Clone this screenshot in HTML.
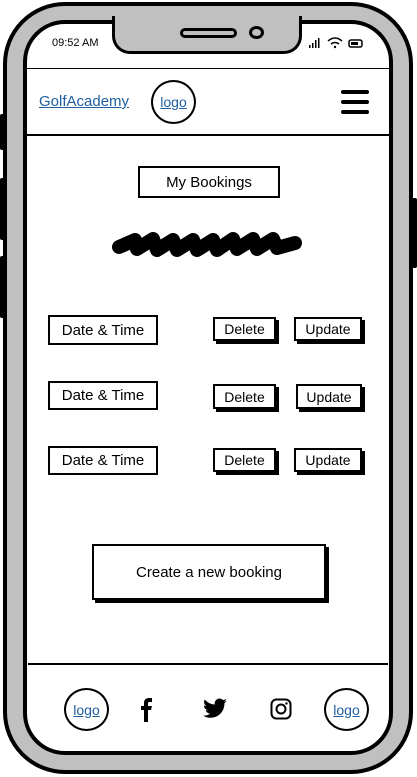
<!DOCTYPE html>
<html><head><meta charset="utf-8"><style>
*{margin:0;padding:0;box-sizing:border-box}
body{width:417px;height:777px;overflow:hidden;background:#fff;position:relative;font-family:"Liberation Sans",sans-serif}
.a{position:absolute}
.box{position:absolute;border:2px solid #000;background:#fff;display:flex;align-items:center;justify-content:center;font-size:15px;color:#000}
.btn{position:absolute;border:2px solid #000;background:#fff;display:flex;align-items:center;justify-content:center;font-size:14px;box-shadow:3px 3px 0 #000}
.logo{position:absolute;border:2px solid #000;border-radius:50%;display:flex;align-items:center;justify-content:center;color:#1f5fa0;text-decoration:underline;font-size:14px;background:#fff}
</style></head><body>
<div class="a" style="left:0;top:114px;width:5px;height:36px;background:#000;border-radius:2px"></div>
<div class="a" style="left:0;top:178px;width:5px;height:62px;background:#000;border-radius:2px"></div>
<div class="a" style="left:0;top:256px;width:5px;height:62px;background:#000;border-radius:2px"></div>
<div class="a" style="right:0;top:198px;width:5px;height:70px;background:#000;border-radius:2px"></div>
<div class="a" style="left:3px;top:2px;width:410px;height:772px;border:4px solid #000;border-radius:62px;background:#c0c0c0"></div>
<div class="a" style="left:23px;top:20px;width:370px;height:735px;border:4px solid #000;border-radius:42px;background:#fff"></div>
<div class="a" style="z-index:2;left:112px;top:16px;width:190px;height:38px;background:#c0c0c0;border:3px solid #000;border-top:none;border-radius:0 0 18px 18px"></div>
<div class="a" style="z-index:3;left:180px;top:28px;width:57px;height:10px;border:3px solid #000;border-radius:6px;background:#c0c0c0"></div>
<div class="a" style="z-index:3;left:249px;top:26px;width:15px;height:13px;border:3px solid #000;border-radius:50%;background:#c0c0c0"></div>
<div class="a" style="left:52px;top:37px;font-size:11px">09:52 AM</div>
<svg class="a" style="left:308px;top:36px" width="56" height="14"><g fill="#000"><rect x="1" y="9" width="1.5" height="3"/><rect x="4" y="7" width="1.5" height="5"/><rect x="7" y="4" width="1.5" height="8"/><rect x="10" y="2" width="1.5" height="10"/></g>
<g fill="none" stroke="#000" stroke-width="1.5"><path d="M20 5q7-6 14 0M23 8q4-3 8 0"/></g><circle cx="27" cy="11" r="1.2"/><rect x="41" y="4" width="13" height="7" rx="2" fill="none" stroke="#000" stroke-width="1.5"/><rect x="43" y="6" width="7" height="3"/></svg>
<div class="a" style="left:26px;top:68px;width:364px;height:68px;border:1px solid #000;border-bottom:2px solid #000"></div>
<div class="a" style="left:39px;top:93px;font-size:15px;color:#1f5fa0;text-decoration:underline">GolfAcademy</div>
<div class="logo" style="left:151px;top:80px;width:45px;height:44px">logo</div>
<div class="a" style="left:341px;top:90px;width:28px;height:4px;background:#000;border-radius:2px"></div>
<div class="a" style="left:341px;top:100px;width:28px;height:4px;background:#000;border-radius:2px"></div>
<div class="a" style="left:341px;top:110px;width:28px;height:4px;background:#000;border-radius:2px"></div>
<div class="box" style="left:138px;top:166px;width:142px;height:32px">My Bookings</div>
<svg class="a" style="left:105px;top:225px" width="205" height="40"><path d="M14 22L30 15L32 24L48 14L52 25L68 15L72 25L88 15L92 25L108 15L112 25L128 14L132 24L148 14L152 24L168 14L172 23L190 18" fill="none" stroke="#000" stroke-width="14" stroke-linecap="round" stroke-linejoin="round"/></svg>
<div class="box" style="left:48px;top:315px;width:110px;height:30px">Date &amp; Time</div>
<div class="btn" style="left:213px;top:317px;width:63px;height:24px">Delete</div>
<div class="btn" style="left:294px;top:317px;width:68px;height:24px">Update</div>
<div class="box" style="left:48px;top:381px;width:110px;height:29px">Date &amp; Time</div>
<div class="btn" style="left:213px;top:384px;width:63px;height:25px">Delete</div>
<div class="btn" style="left:296px;top:384px;width:66px;height:25px">Update</div>
<div class="box" style="left:48px;top:446px;width:110px;height:29px">Date &amp; Time</div>
<div class="btn" style="left:213px;top:448px;width:63px;height:24px">Delete</div>
<div class="btn" style="left:294px;top:448px;width:68px;height:24px">Update</div>
<div class="btn" style="left:92px;top:544px;width:234px;height:56px;font-size:15px">Create a new booking</div>
<div class="a" style="left:28px;top:663px;width:360px;height:2px;background:#000"></div>
<div class="logo" style="left:64px;top:688px;width:45px;height:43px">logo</div>
<div class="logo" style="left:324px;top:688px;width:45px;height:43px">logo</div>
<svg class="a" style="left:138px;top:697px" width="18" height="26"><path d="M6 25V13H3V9H6V6Q6 1 11 1H14V5H11Q10 5 10 7V9H14L13 13H10V25Z" fill="#000"/></svg>
<svg class="a" style="left:202px;top:698px" width="26" height="22" viewBox="0 0 24 20"><path d="M23 2.5c-.8.4-1.7.6-2.6.7.9-.6 1.6-1.4 2-2.5-.9.5-1.9.9-2.9 1.1A4.5 4.5 0 0 0 11.8 5.9 12.8 12.8 0 0 1 2.5 1.2 4.5 4.5 0 0 0 3.9 7.2 4.4 4.4 0 0 1 1.8 6.6c0 2.2 1.6 4 3.6 4.4-.7.2-1.4.2-2 .1.6 1.8 2.2 3.1 4.2 3.1A9 9 0 0 1 1 16.1a12.8 12.8 0 0 0 6.9 2c8.3 0 12.8-6.9 12.8-12.8v-.6c.9-.6 1.6-1.4 2.3-2.2z" fill="#000"/></svg>
<svg class="a" style="left:270px;top:698px" width="22" height="22"><rect x="1.5" y="1.5" width="19" height="19" rx="5" fill="none" stroke="#000" stroke-width="2"/><circle cx="11" cy="11" r="4.5" fill="none" stroke="#000" stroke-width="2"/><circle cx="16.5" cy="5.5" r="1.2"/></svg>
</body></html>
